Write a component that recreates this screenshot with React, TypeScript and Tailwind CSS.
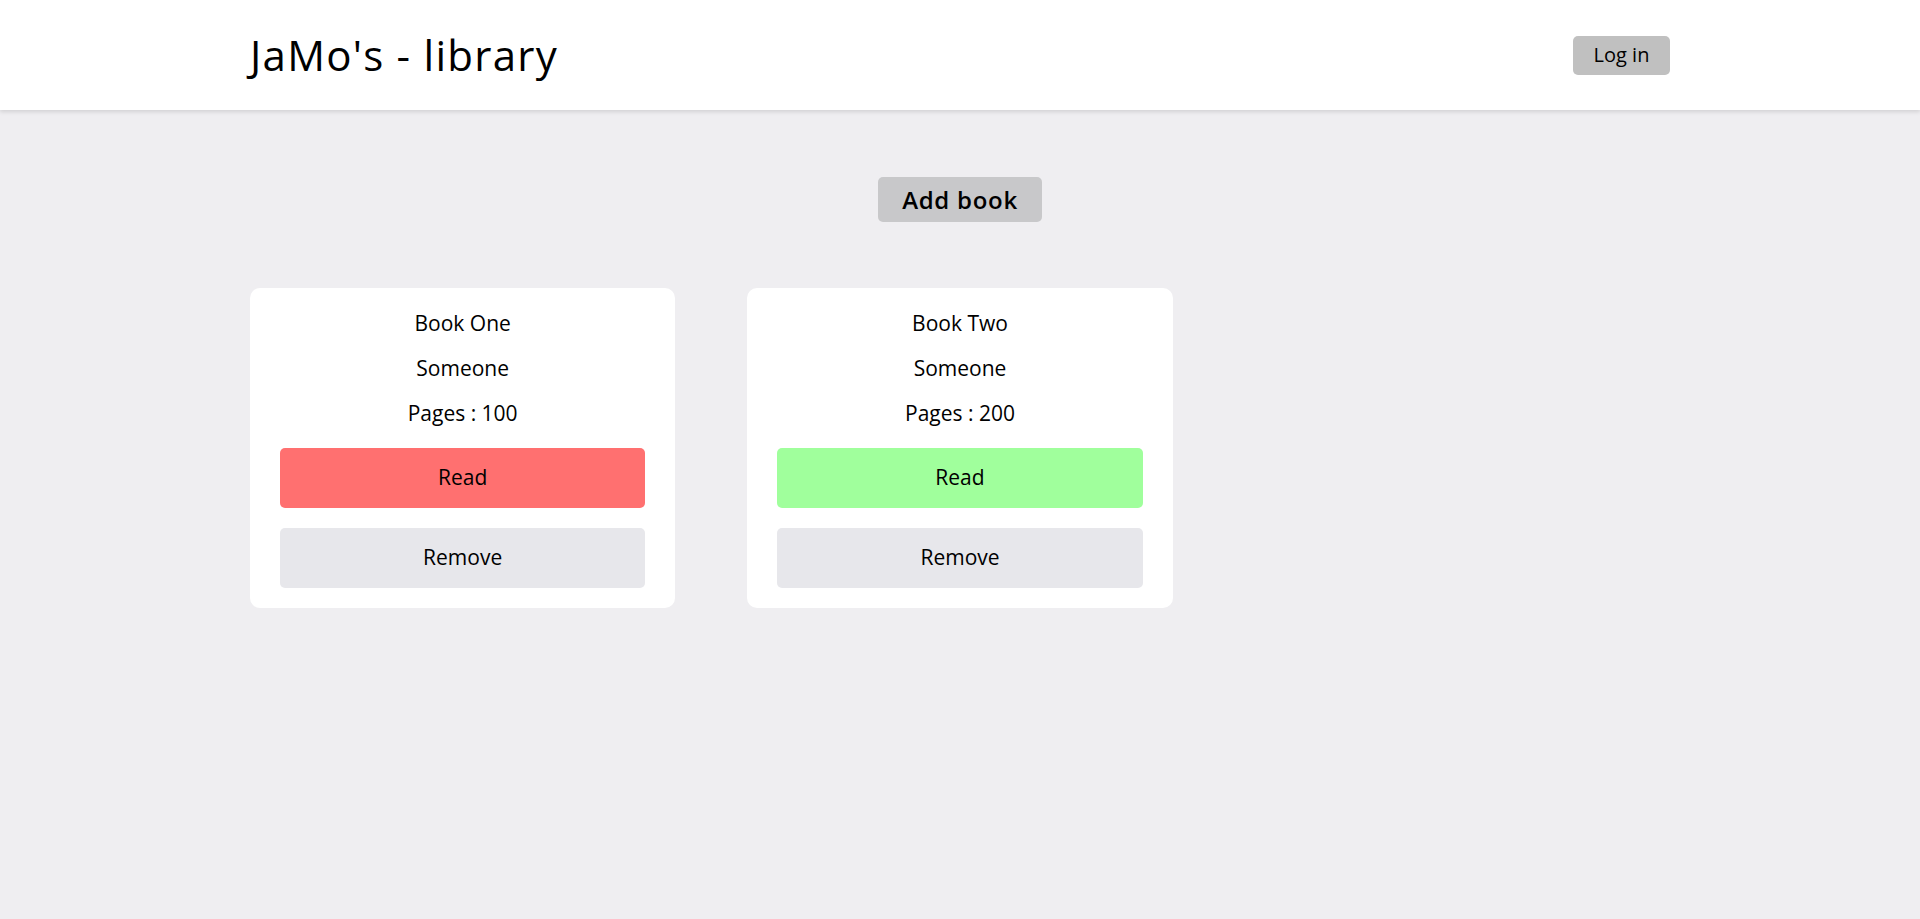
import { useState } from 'react';

type Book = {
  id: number;
  title: string;
  author: string;
  pages: number;
  read: boolean;
};

const INITIAL: Book[] = [
  { id: 1, title: 'Book One', author: 'Someone', pages: 100, read: false },
  { id: 2, title: 'Book Two', author: 'Someone', pages: 200, read: true },
];

function BookCard({
  book,
  onToggle,
  onRemove,
}: {
  book: Book;
  onToggle: () => void;
  onRemove: () => void;
}) {
  return (
    <div className="flex flex-col rounded-[10px] bg-white px-[30px] pt-5 pb-5 text-center text-[21px]">
      <div className="flex flex-col gap-[15px]">
        <p className="leading-[30px]">{book.title}</p>
        <p className="leading-[30px]">{book.author}</p>
        <p className="leading-[30px]">Pages : {book.pages}</p>
      </div>
      <button
        onClick={onToggle}
        className={
          'mt-5 h-[60px] rounded-[5px] ' + (book.read ? 'bg-[#a0ff9c]' : 'bg-[#ff7070]')
        }
      >
        Read
      </button>
      <button onClick={onRemove} className="mt-5 h-[60px] rounded-[5px] bg-[#e7e7eb]">
        Remove
      </button>
    </div>
  );
}

export default function App() {
  const [books, setBooks] = useState<Book[]>(INITIAL);

  return (
    <div
      className="min-h-screen bg-[#efeef1] text-black"
      style={{ fontFamily: '"Open Sans", "Liberation Sans", sans-serif' }}
    >
      <header className="bg-white shadow-[0_2px_4px_rgba(0,0,0,0.12)]">
        <div className="mx-auto flex h-[110px] max-w-[1420px] items-center justify-between">
          <h1 className="text-[42px] leading-none tracking-[0.03em]">JaMo's - library</h1>
          <button className="h-[39px] w-[97px] rounded-[5px] bg-[#c0c0c0] text-[20px]">Log in</button>
        </div>
      </header>

      <main className="mx-auto max-w-[1420px]">
        <div className="flex justify-center pt-[67px]">
          <button className="h-[45px] w-[164px] rounded-[5px] bg-[#c8c8ca] text-[24px] font-semibold tracking-[0.03em]">
            Add book
          </button>
        </div>

        <div className="mt-[66px] grid grid-cols-3 gap-[72px]">
          {books.map((b) => (
            <BookCard
              key={b.id}
              book={b}
              onToggle={() =>
                setBooks((prev) => prev.map((x) => (x.id === b.id ? { ...x, read: !x.read } : x)))
              }
              onRemove={() => setBooks((prev) => prev.filter((x) => x.id !== b.id))}
            />
          ))}
        </div>
      </main>
    </div>
  );
}
